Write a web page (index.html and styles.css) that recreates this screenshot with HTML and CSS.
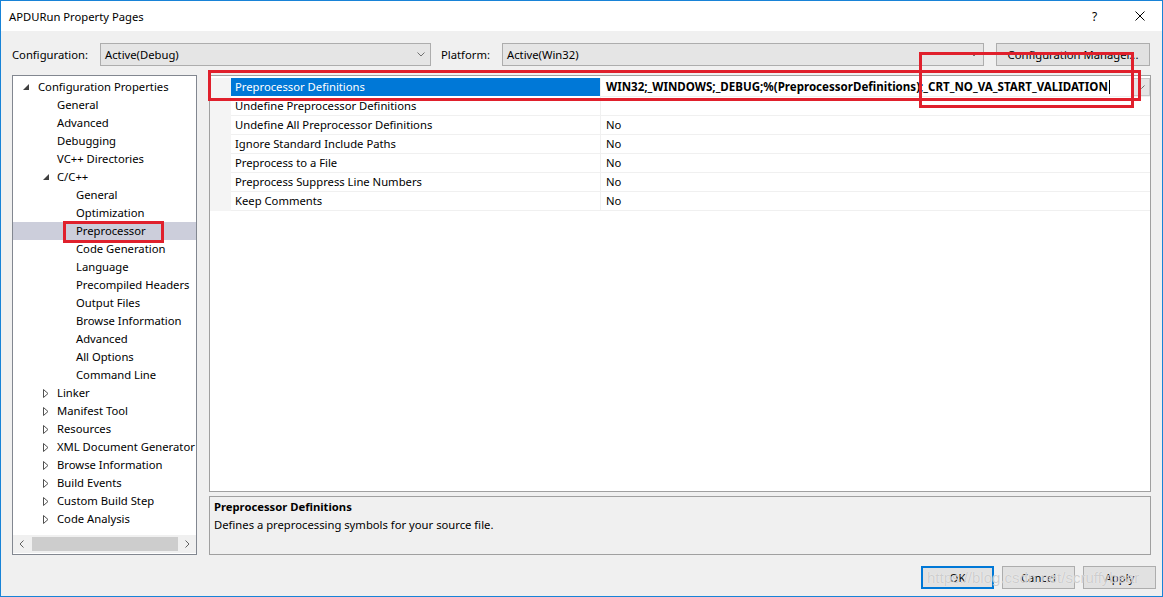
FILE: index.html
```html
<!DOCTYPE html>
<html>
<head>
<meta charset="utf-8">
<title>APDURun Property Pages</title>
<link rel="stylesheet" href="styles.css">
</head>
<body>
<div class="window">
  <header class="titlebar">
    <span class="title">APDURun Property Pages</span>
    <div class="caption-btns">
      <span class="cap help">?</span>
      <span class="cap close"><svg width="10" height="10" viewBox="0 0 10 10"><path d="M0.5 0.5 L9.5 9.5 M9.5 0.5 L0.5 9.5" stroke="#000" stroke-width="1" fill="none"/></svg></span>
    </div>
  </header>
  <div class="body">
    <div class="toolbar">
      <span class="lbl lbl-config">Configuration:</span>
      <div class="combo combo-config"><span>Active(Debug)</span><svg class="chev" width="8" height="5" viewBox="0 0 8 5"><path d="M0.5 0.5 L4 4 L7.5 0.5" stroke="#707070" fill="none"/></svg></div>
      <span class="lbl lbl-platform">Platform:</span>
      <div class="combo combo-platform"><span>Active(Win32)</span><svg class="chev" width="8" height="5" viewBox="0 0 8 5"><path d="M0.5 0.5 L4 4 L7.5 0.5" stroke="#707070" fill="none"/></svg></div>
      <button class="btn btn-cfgmgr">Configuration Manager...</button>
    </div>
    <div class="main">
      <div class="tree">
        <ul class="tree-rows">
          <li class="trow l0"><span class="exp"><svg width="6" height="6" viewBox="0 0 6 6"><path d="M6 0 L6 6 L0 6 Z" fill="#404040"/></svg></span>Configuration Properties</li>
          <li class="trow l1"><span class="exp"></span>General</li>
          <li class="trow l1"><span class="exp"></span>Advanced</li>
          <li class="trow l1"><span class="exp"></span>Debugging</li>
          <li class="trow l1"><span class="exp"></span>VC++ Directories</li>
          <li class="trow l1"><span class="exp"><svg width="6" height="6" viewBox="0 0 6 6"><path d="M6 0 L6 6 L0 6 Z" fill="#404040"/></svg></span>C/C++</li>
          <li class="trow l2"><span class="exp"></span>General</li>
          <li class="trow l2"><span class="exp"></span>Optimization</li>
          <li class="trow l2 sel"><span class="exp"></span>Preprocessor</li>
          <li class="trow l2"><span class="exp"></span>Code Generation</li>
          <li class="trow l2"><span class="exp"></span>Language</li>
          <li class="trow l2"><span class="exp"></span>Precompiled Headers</li>
          <li class="trow l2"><span class="exp"></span>Output Files</li>
          <li class="trow l2"><span class="exp"></span>Browse Information</li>
          <li class="trow l2"><span class="exp"></span>Advanced</li>
          <li class="trow l2"><span class="exp"></span>All Options</li>
          <li class="trow l2"><span class="exp"></span>Command Line</li>
          <li class="trow l1"><span class="exp"><svg class="col" width="6" height="9" viewBox="0 0 6 9"><path d="M0.5 0.5 L5 4.5 L0.5 8.5 Z" stroke="#505050" fill="none"/></svg></span>Linker</li>
          <li class="trow l1"><span class="exp"><svg class="col" width="6" height="9" viewBox="0 0 6 9"><path d="M0.5 0.5 L5 4.5 L0.5 8.5 Z" stroke="#505050" fill="none"/></svg></span>Manifest Tool</li>
          <li class="trow l1"><span class="exp"><svg class="col" width="6" height="9" viewBox="0 0 6 9"><path d="M0.5 0.5 L5 4.5 L0.5 8.5 Z" stroke="#505050" fill="none"/></svg></span>Resources</li>
          <li class="trow l1"><span class="exp"><svg class="col" width="6" height="9" viewBox="0 0 6 9"><path d="M0.5 0.5 L5 4.5 L0.5 8.5 Z" stroke="#505050" fill="none"/></svg></span>XML Document Generator</li>
          <li class="trow l1"><span class="exp"><svg class="col" width="6" height="9" viewBox="0 0 6 9"><path d="M0.5 0.5 L5 4.5 L0.5 8.5 Z" stroke="#505050" fill="none"/></svg></span>Browse Information</li>
          <li class="trow l1"><span class="exp"><svg class="col" width="6" height="9" viewBox="0 0 6 9"><path d="M0.5 0.5 L5 4.5 L0.5 8.5 Z" stroke="#505050" fill="none"/></svg></span>Build Events</li>
          <li class="trow l1"><span class="exp"><svg class="col" width="6" height="9" viewBox="0 0 6 9"><path d="M0.5 0.5 L5 4.5 L0.5 8.5 Z" stroke="#505050" fill="none"/></svg></span>Custom Build Step</li>
          <li class="trow l1"><span class="exp"><svg class="col" width="6" height="9" viewBox="0 0 6 9"><path d="M0.5 0.5 L5 4.5 L0.5 8.5 Z" stroke="#505050" fill="none"/></svg></span>Code Analysis</li>
        </ul>
        <div class="hscroll">
          <span class="sarrow"><svg width="5" height="8" viewBox="0 0 5 8"><path d="M4.5 0.5 L1 4 L4.5 7.5" stroke="#606060" fill="none"/></svg></span>
          <span class="track"><span class="thumb"></span></span>
          <span class="sarrow"><svg width="5" height="8" viewBox="0 0 5 8"><path d="M0.5 0.5 L4 4 L0.5 7.5" stroke="#606060" fill="none"/></svg></span>
        </div>
      </div>
      <div class="right">
        <div class="grid">
          <div class="grow selected"><span class="gutter"></span><span class="name">Preprocessor Definitions</span><span class="value"><b>WIN32;_WINDOWS;_DEBUG;%(PreprocessorDefinitions);_CRT_NO_VA_START_VALIDATION</b><span class="caret"></span><span class="dd"><svg width="7" height="4" viewBox="0 0 7 4"><path d="M0.5 0.5 L3.5 3.5 L6.5 0.5" stroke="#707070" fill="none"/></svg></span></span></div>
          <div class="grow"><span class="gutter"></span><span class="name">Undefine Preprocessor Definitions</span><span class="value"></span></div>
          <div class="grow"><span class="gutter"></span><span class="name">Undefine All Preprocessor Definitions</span><span class="value">No</span></div>
          <div class="grow"><span class="gutter"></span><span class="name">Ignore Standard Include Paths</span><span class="value">No</span></div>
          <div class="grow"><span class="gutter"></span><span class="name">Preprocess to a File</span><span class="value">No</span></div>
          <div class="grow"><span class="gutter"></span><span class="name">Preprocess Suppress Line Numbers</span><span class="value">No</span></div>
          <div class="grow"><span class="gutter"></span><span class="name">Keep Comments</span><span class="value">No</span></div>
        </div>
        <div class="desc">
          <div class="desc-title">Preprocessor Definitions</div>
          <div class="desc-text">Defines a preprocessing symbols for your source file.</div>
        </div>
      </div>
    </div>
    <div class="buttons">
      <button class="btn btn-ok">OK</button>
      <button class="btn">Cancel</button>
      <button class="btn">Apply</button>
    </div>
  </div>
  <div class="mark mark-row"></div>
  <div class="mark mark-value"></div>
  <div class="mark mark-tree"></div>
  <div class="watermark">https://blog.csdn.net/scruffybear</div>
</div>
</body>
</html>
```

FILE: styles.css
```css
* { box-sizing: border-box; }
html, body { margin: 0; padding: 0; }
body {
  font-family: "Noto Sans", "Open Sans", sans-serif;
  font-size: 11.25px;
  color: #000;
  background: #fff;
}
.window {
  position: relative;
  width: 1163px;
  height: 597px;
  border: 1px solid #1883d7;
  background: #f0f0f0;
  display: flex;
  flex-direction: column;
  overflow: hidden;
}
.titlebar {
  flex: none;
  height: 30px;
  background: #fff;
  display: flex;
  align-items: center;
  justify-content: space-between;
  padding-left: 8px;
}
.caption-btns { display: flex; height: 100%; }
.cap {
  width: 45px;
  display: flex;
  align-items: center;
  justify-content: center;
  font-size: 12px;
}
.body {
  flex: 1;
  display: flex;
  flex-direction: column;
  padding: 12px 10px 0 11px;
}
.toolbar {
  display: flex;
  align-items: center;
  height: 23px;
}
.lbl { white-space: nowrap; }
.lbl-config { width: 88px; }
.lbl-platform { margin-left: 10px; width: 61px; }
.combo {
  height: 23px;
  border: 1px solid #adadad;
  background: #e5e5e5;
  display: flex;
  align-items: center;
  justify-content: space-between;
  padding: 0 5px 0 4px;
}
.combo-config { width: 331px; }
.combo-platform { width: 482px; }
.btn {
  height: 23px;
  width: 73px;
  background: #e1e1e1;
  border: 1px solid #adadad;
  font: inherit;
  color: #000;
  padding: 0;
}
.btn-cfgmgr { margin-left: 12px; width: 154px; }
.main {
  display: flex;
  margin-top: 9px;
  height: 480px;
}
.tree {
  width: 185px;
  border: 1px solid #828790;
  background: #fff;
  display: flex;
  flex-direction: column;
}
.tree-rows {
  list-style: none;
  margin: 0;
  padding: 2px 0 0 0;
  flex: 1;
  overflow: hidden;
}
.trow {
  height: 18px;
  line-height: 18px;
  display: flex;
  align-items: center;
  white-space: nowrap;
}
.trow.sel { background: #cccedb; }
.l0 { padding-left: 6px; }
.l1 { padding-left: 25px; }
.l2 { padding-left: 44px; }
.exp {
  flex: none;
  width: 19px;
  height: 18px;
  display: flex;
  align-items: center;
  padding-left: 4px;
}
.l1 .exp { padding-left: 5px; }
.hscroll {
  flex: none;
  height: 18px;
  margin-bottom: 1px;
  display: flex;
  background: #f0f0f0;
}
.sarrow {
  width: 17px;
  display: flex;
  align-items: center;
  justify-content: center;
}
.track {
  flex: 1;
  padding: 2px 0;
  display: flex;
}
.thumb {
  margin-left: 2px;
  width: 146px;
  background: #cdcdcd;
}
.right {
  margin-left: 12px;
  width: 942px;
  display: flex;
  flex-direction: column;
}
.grid {
  flex: none;
  height: 417px;
  border: 1px solid #a0a0a0;
  background: #fff;
  padding-top: 2px;
}
.grow {
  display: flex;
  height: 19px;
  white-space: nowrap;
}
.gutter {
  flex: none;
  width: 21px;
  background: #f4f4f4;
}
.name {
  flex: none;
  width: 369px;
  padding-left: 4px;
  line-height: 18px;
  border-bottom: 1px solid #f0f0f0;
}
.value {
  flex: 1;
  display: flex;
  align-items: center;
  padding-left: 5px;
  line-height: 18px;
  border-left: 1px solid #f0f0f0;
  border-bottom: 1px solid #f0f0f0;
}
.selected .name {
  background: #0078d7;
  color: #fff;
  border-bottom-color: #fff;
}
.selected .value b { font-weight: 700; font-size: 11.55px; }
.caret {
  width: 1px;
  height: 14px;
  background: #000;
  margin-left: 1px;
}
.dd {
  margin-left: auto;
  width: 17px;
  height: 18px;
  background: #e5e5e5;
  border: 1px solid #c8c8c8;
  display: flex;
  align-items: center;
  justify-content: center;
}
.desc {
  margin-top: 4px;
  flex: 1;
  border: 1px solid #a0a0a0;
  padding: 1px 4px;
  line-height: 18px;
}
.desc-title { font-weight: 700; }
.buttons {
  display: flex;
  justify-content: flex-end;
  gap: 8px;
  margin-top: 11px;
  margin-right: -4px;
}
.btn-ok { border: 2px solid #0078d7; }
.mark {
  position: absolute;
  border: 3px solid #e0202c;
  pointer-events: none;
}
.mark-row { left: 207px; top: 69px; width: 933px; height: 31px; }
.mark-value { left: 918px; top: 51px; width: 215px; height: 56px; }
.mark-tree { left: 62px; top: 220px; width: 101px; height: 22px; }
.watermark {
  position: absolute;
  left: 926px;
  top: 568px;
  font-family: "Liberation Sans", sans-serif;
  font-size: 15px;
  color: rgba(190, 190, 190, 0.75);
  text-shadow: 0 0 1px #fff;
  pointer-events: none;
  white-space: nowrap;
}
```
